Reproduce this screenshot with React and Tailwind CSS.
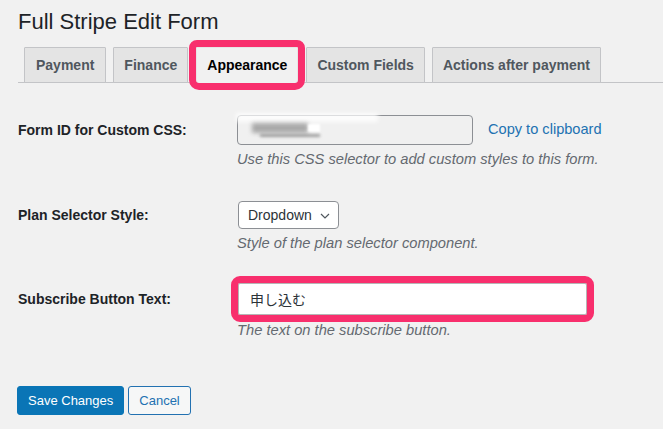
import React, { useState } from 'react';

const tabs = ['Payment', 'Finance', 'Appearance', 'Custom Fields', 'Actions after payment'];

const FormRow = ({ label, children, help, helpGap = 'mt-[4px]' }) => (
    <div className="flex">
        <div className="w-[219px] shrink-0 flex items-start">
            {label}
        </div>
        <div className="flex flex-col">
            {children}
            <p className={`${helpGap} text-[14.7px] leading-[20px] italic text-[#646970] whitespace-nowrap`}>{help}</p>
        </div>
    </div>
);

const App = () => {
    const [active] = useState('Appearance');
    const [buttonText, setButtonText] = useState('申し込む');

    return (
        <div className="min-h-screen w-[663px] h-[429px] overflow-hidden bg-[#f1f1f1] font-['Liberation_Sans','Noto_Sans_CJK_JP',sans-serif] text-[#1d2327]">
            <h1 className="pl-[18px] pt-[7px] text-[22px] leading-[29px] font-normal text-[#1d2327]">Full Stripe Edit Form</h1>

            <div className="ml-[18px] mt-[11px] flex items-end border-b border-[#c3c4c7] pl-[6px] h-[36px]">
                {tabs.map((tab, i) => {
                    const isActive = tab === active;
                    return (
                        <div
                            key={tab}
                            className={
                                'h-[36px] -mb-px flex items-center border text-[14px] font-bold rounded-t-[1px] ' +
                                (i === 0 ? 'px-[11px] ' : 'px-[10px] ') +
                                (i > 0 ? (isActive || i === 3 ? 'ml-[8px] ' : 'ml-[7px] ') : '') +
                                (isActive
                                    ? 'bg-[#f1f1f1] border-[#e6e6e6] border-b-[#f1f1f1] text-black outline-[7px] outline-[#f82f6d] rounded-[3px] z-10 relative'
                                    : 'bg-[#e4e4e4] border-[#c3c4c7] text-[#50575e]')
                            }
                        >
                            {tab}
                        </div>
                    );
                })}
            </div>

            <div className="pl-[18px] mt-[32px]">
                <FormRow
                    label={<span className="h-[30px] flex items-center text-[14px] font-bold">Form ID for Custom CSS:</span>}
                    help="Use this CSS selector to add custom styles to this form."
                >
                    <div className="flex items-center">
                        <div className="relative w-[236px] h-[30px] rounded-[4px] border border-[#8c8f94] bg-[#f0f0f0]">
                            <div className="absolute left-[-2px] top-[-3px] w-[142px] h-[9px] bg-white/80 blur-[2px]" />
                            <div className="absolute left-[14px] top-[7px] w-[56px] h-[10px] bg-[#a9a9a9] blur-[2px]" />
                            <div className="absolute left-[70px] top-[8px] w-[12px] h-[8px] bg-white blur-[1px]" />
                            <div className="absolute left-[22px] top-[18px] w-[60px] h-[3px] bg-[#6b6b6b]/60 blur-[1.5px]" />
                        </div>
                        <a className="ml-[15px] text-[14.6px] text-[#2271b1]">Copy to clipboard</a>
                    </div>
                </FormRow>

                <div className="mt-[32px]">
                    <FormRow
                        label={<span className="h-[28px] flex items-center text-[14px] font-bold">Plan Selector Style:</span>}
                        help="Style of the plan selector component."
                    >
                        <div className="ml-[1px] w-[101px] h-[28px] flex items-center justify-between pl-[9px] pr-[8px] rounded-[4px] border border-[#8c8f94] bg-white text-[14px] text-[#2c3338]">
                            <span>Dropdown</span>
                            <svg width="10" height="6" viewBox="0 0 10 6" fill="none" className="mt-[1px]">
                                <polyline points="1,1 5,5 9,1" stroke="#50575e" strokeWidth="1.2" />
                            </svg>
                        </div>
                    </FormRow>
                </div>

                <div className="mt-[30px]">
                    <FormRow
                        label={<span className="h-[32px] flex items-center text-[14px] font-bold">Subscribe Button Text:</span>}
                        help="The text on the subscribe button."
                        helpGap="mt-[5px]"
                    >
                        <input
                            value={buttonText}
                            onChange={(e) => setButtonText(e.target.value)}
                            className="ml-[1px] w-[349px] h-[32px] px-[11px] rounded-[2px] border border-[#b5b5b5] bg-white text-[14px] text-[#2c3338] outline-[7px] outline-[#f82f6d] font-['Liberation_Sans','Noto_Sans_CJK_JP',sans-serif]"
                        />
                    </FormRow>
                </div>

                <div className="mt-[46px] flex gap-[4px] -ml-[1px]">
                    <button className="h-[29px] px-[10px] rounded-[3px] bg-[#0a75b6] border border-[#0a75b6] text-white text-[13px]">Save Changes</button>
                    <button className="h-[29px] px-[10px] rounded-[3px] bg-[#f6f7f7] border border-[#2271b1] text-[#2271b1] text-[13px]">Cancel</button>
                </div>
            </div>
        </div>
    );
};

export default App;
